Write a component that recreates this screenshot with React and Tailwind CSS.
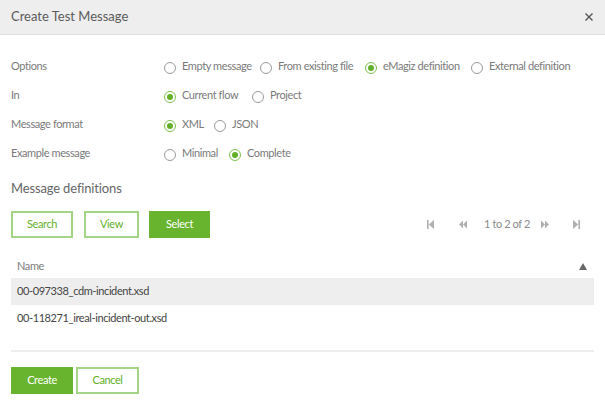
import React from "react";

const Radio = ({ checked, label, w }) => (
  <div className={`flex items-center shrink-0 whitespace-nowrap ${w}`}>
    <span
      className={`flex items-center justify-center shrink-0 w-[12px] h-[12px] rounded-full border mt-[2px] ${
        checked ? "border-[#7dc24d]" : "border-[#9a9a9a]"
      }`}
    >
      {checked && <span className="w-[6px] h-[6px] rounded-full bg-[#62b02a]" />}
    </span>
    <span className="ml-[6px] text-[#7a7a7a]">{label}</span>
  </div>
);

const Row = ({ label, children }) => (
  <div className="flex items-center h-[29px] whitespace-nowrap">
    <div className="w-[153px] shrink-0 text-[#7a7a7a]">{label}</div>
    <div className="flex items-center">{children}</div>
  </div>
);

const PagIcon = ({ type }) => {
  const c = "#b0b0b0";
  if (type === "first")
    return (
      <svg width="7" height="9" viewBox="0 0 7 9" className="block">
        <rect x="0" y="0" width="1.6" height="9" fill={c} />
        <polygon points="7,0 1.8,4.5 7,9" fill={c} />
      </svg>
    );
  if (type === "last")
    return (
      <svg width="7" height="9" viewBox="0 0 7 9" className="block">
        <rect x="5.4" y="0" width="1.6" height="9" fill={c} />
        <polygon points="0,0 5.2,4.5 0,9" fill={c} />
      </svg>
    );
  if (type === "prev")
    return (
      <svg width="8" height="9" viewBox="0 0 9 9" className="block">
        <polygon points="4.5,0 0,4.5 4.5,9" fill={c} />
        <polygon points="9,0 4.5,4.5 9,9" fill={c} />
      </svg>
    );
  return (
    <svg width="8" height="9" viewBox="0 0 9 9" className="block">
      <polygon points="0,0 4.5,4.5 0,9" fill={c} />
      <polygon points="4.5,0 9,4.5 4.5,9" fill={c} />
    </svg>
  );
};

export default function App() {
  return (
    <div
      className="w-[605px] h-[403px] bg-white overflow-hidden text-[11px] tracking-[-0.4px]"
      style={{ fontFamily: "Lato, 'Noto Sans', sans-serif" }}
    >
      <div className="h-[35px] bg-[#eeeeee] border-b border-[#dcdcdc] flex items-center justify-between pl-[11px] pr-[12px]">
        <span className="text-[13px] tracking-[0px] text-[#5a5a5a]">Create Test Message</span>
        <svg width="8" height="8" viewBox="0 0 8 8">
          <path d="M0.5 0.5 L7.5 7.5 M7.5 0.5 L0.5 7.5" stroke="#555" strokeWidth="1.4" />
        </svg>
      </div>

      <div className="px-[11px]">
        <div className="mt-[17px]">
          <Row label="Options">
            <Radio label="Empty message" w="w-[96px]" />
            <Radio label="From existing file" w="w-[105px]" />
            <Radio checked label="eMagiz definition" w="w-[106px]" />
            <Radio label="External definition" w="" />
          </Row>
          <Row label="In">
            <Radio checked label="Current flow" w="w-[88px]" />
            <Radio label="Project" w="" />
          </Row>
          <Row label="Message format">
            <Radio checked label="XML" w="w-[50px]" />
            <Radio label="JSON" w="" />
          </Row>
          <Row label="Example message">
            <Radio label="Minimal" w="w-[65px]" />
            <Radio checked label="Complete" w="" />
          </Row>
        </div>

        <div className="mt-[10px] h-[22px] flex items-center text-[13px] tracking-[-0.15px] text-[#666666]">
          Message definitions
        </div>

        <div className="mt-[11px] flex items-center">
          <button className="w-[62px] h-[27px] border-2 border-[#a3d585] text-[#62b02a]">Search</button>
          <button className="ml-[11px] w-[55px] h-[27px] border-2 border-[#a3d585] text-[#62b02a]">View</button>
          <button className="ml-[10px] w-[61px] h-[27px] bg-[#68b42e] text-white">Select</button>
          <div className="ml-auto mr-[14px] flex items-center text-[#8a8a8a]">
            <PagIcon type="first" />
            <span className="ml-[25px]"><PagIcon type="prev" /></span>
            <span className="ml-[17px]">1 to 2 of 2</span>
            <span className="ml-[11px]"><PagIcon type="next" /></span>
            <span className="ml-[24px]"><PagIcon type="last" /></span>
          </div>
        </div>

        <div className="mt-[17px]">
          <div className="h-[23px] flex items-center justify-between pl-[6px] pr-[7px] text-[#7a7a7a]">
            <span>Name</span>
            <svg width="8" height="7" viewBox="0 0 8 7">
              <polygon points="4,0 8,7 0,7" fill="#666" />
            </svg>
          </div>
          <div className="h-[27px] flex items-center pl-[6px] bg-[#eeeeee] text-[#444444]">
            00-097338_cdm-incident.xsd
          </div>
          <div className="h-[27px] flex items-center pl-[6px] text-[#444444]">
            00-118271_ireal-incident-out.xsd
          </div>
        </div>

        <div className="mt-[18px] h-[2px] bg-[#eeeeee]" />

        <div className="mt-[15px] flex items-center">
          <button className="w-[62px] h-[27px] bg-[#68b42e] text-white">Create</button>
          <button className="ml-[3px] w-[63px] h-[27px] border-2 border-[#a3d585] text-[#62b02a]">Cancel</button>
        </div>
      </div>
    </div>
  );
}
